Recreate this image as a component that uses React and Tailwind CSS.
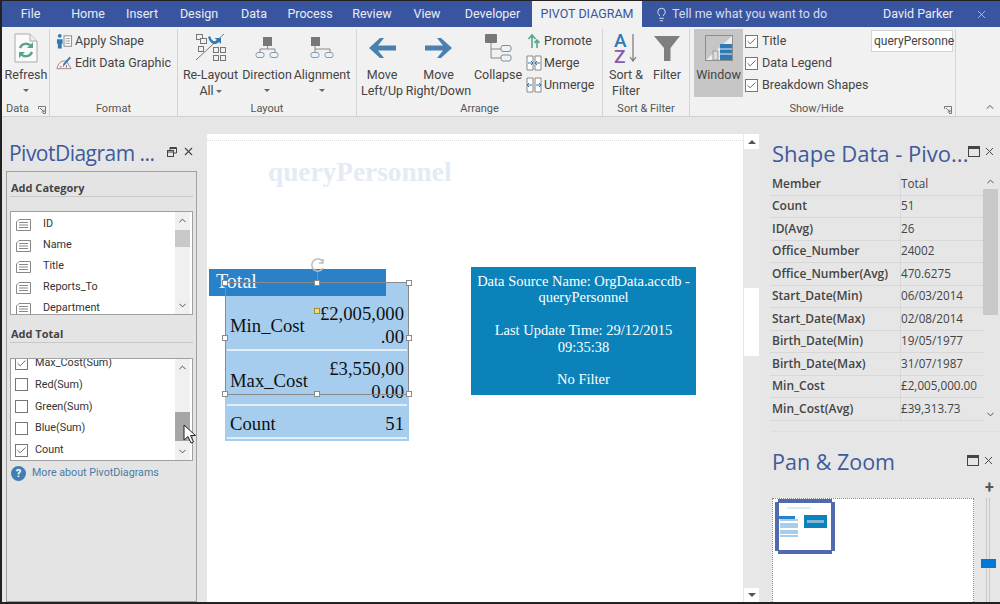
import React from 'react';
import { Check, ChevronDown, ChevronUp, Lightbulb, X } from 'lucide-react';

const TABS = [
  ['File', 'w-[57px]'],
  ['Home', 'w-[58px]'],
  ['Insert', 'w-[50px]'],
  ['Design', 'w-[64px]'],
  ['Data', 'w-[46px]'],
  ['Process', 'w-[66px]'],
  ['Review', 'w-[58px]'],
  ['View', 'w-[52px]'],
  ['Developer', 'w-[79px]'],
];

const CATEGORIES = ['ID', 'Name', 'Title', 'Reports_To', 'Department'];

const TOTALS = [
  ['Red(Sum)', false],
  ['Green(Sum)', false],
  ['Blue(Sum)', false],
  ['Count', true],
];

const SHAPE_DATA = [
  ['Member', 'Total'],
  ['Count', '51'],
  ['ID(Avg)', '26'],
  ['Office_Number', '24002'],
  ['Office_Number(Avg)', '470.6275'],
  ['Start_Date(Min)', '06/03/2014'],
  ['Start_Date(Max)', '02/08/2014'],
  ['Birth_Date(Min)', '19/05/1977'],
  ['Birth_Date(Max)', '31/07/1987'],
  ['Min_Cost', '£2,005,000.00'],
  ['Min_Cost(Avg)', '£39,313.73'],
];

const Caret = () => (
  <div className="flex h-[14px] items-center justify-center">
    <div className="h-0 w-0 border-x-[3px] border-t-[3px] border-x-transparent border-t-[#666]" />
  </div>
);

const Launcher = () => (
  <svg width="8" height="8" viewBox="0 0 8 8" fill="none" stroke="#777" strokeWidth="1">
    <path d="M0.5 3V0.5H7.5V7.5H5M2 2L6 6M6 3.5V6H3.5" />
  </svg>
);

const Group = ({ width, label, labelClass = '', launcher, children }) => (
  <div className={`relative flex h-[88px] shrink-0 flex-col border-r border-[#d4d4d4] ${width}`}>
    <div className="flex h-[72px] items-start">{children}</div>
    <div className={`text-center text-[11px] leading-[16px] text-[#555] ${labelClass}`}>{label}</div>
    {launcher && (
      <div className="absolute right-[3px] bottom-[3px] flex">
        <Launcher />
      </div>
    )}
  </div>
);

const BigButton = ({ width, icon, lines, caret }) => (
  <div className={`flex shrink-0 flex-col items-center ${width}`}>
    <div className="flex h-[38px] w-full items-center justify-center">{icon}</div>
    {lines.map((line, i) => (
      <div key={i} className="flex items-center gap-[2px] whitespace-nowrap text-[12.5px] leading-[16px] text-[#444]">
        {line}
      </div>
    ))}
    {caret && <Caret />}
  </div>
);

const SmallButton = ({ icon, label }) => (
  <div className="flex h-[22px] items-center gap-[2px] whitespace-nowrap text-[12.5px] text-[#444]">
    <div className="flex w-[17px] justify-center">{icon}</div>
    {label}
  </div>
);

const CheckBox = ({ checked, size = 'h-[13px] w-[13px]' }) => (
  <div className={`flex shrink-0 items-center justify-center border border-[#777] bg-white ${size}`}>
    {checked && <Check size={11} strokeWidth={1.6} className="text-[#333]" />}
  </div>
);

const RefreshIcon = () => (
  <svg width="24" height="30" viewBox="0 0 24 30">
    <path d="M1 1H16L23 8V29H1Z" fill="#fafafa" stroke="#aaa" />
    <path d="M16 1V8H23" fill="#eee" stroke="#aaa" />
    <path d="M6 15a6.5 6.5 0 0 1 11-2M18 19a6.5 6.5 0 0 1-11 2" fill="none" stroke="#5aa58a" strokeWidth="2.4" />
    <path d="M19 9V15H13ZM5 25V19H11Z" fill="#5aa58a" />
  </svg>
);

const ApplyShapeIcon = () => (
  <svg width="18" height="17" viewBox="0 0 18 17">
    <circle cx="4" cy="2.5" r="2" fill="#2f79b5" />
    <path d="M1 6H7V11H6V16H2V11H1Z" fill="#2f79b5" />
    <rect x="8.5" y="2.5" width="8" height="11" fill="#fff" stroke="#888" />
    <path d="M10 5.5H15M10 8H15M10 10.5H15" stroke="#999" />
  </svg>
);

const EditGraphicIcon = () => (
  <svg width="18" height="16" viewBox="0 0 18 16" fill="none">
    <path d="M1 14C2 8 6 5 11 6L16 14Z" fill="#f5f5f5" stroke="#a08080" />
    <path d="M4 12H6M8 10V12M11 10V13" stroke="#c05050" />
    <path d="M8 10L15 2" stroke="#2f79b5" strokeWidth="2" />
  </svg>
);

const ReLayoutIcon = () => (
  <svg width="32" height="30" viewBox="0 0 32 30" fill="none" stroke="#777">
    <rect x="1.5" y="1.5" width="6" height="5" />
    <rect x="5.5" y="5.5" width="6" height="5" fill="#f1f1f1" />
    <rect x="3.5" y="13.5" width="5" height="5" />
    <path d="M1 27L29 1" />
    <rect x="18.5" y="14.5" width="5" height="5" />
    <rect x="25.5" y="14.5" width="5" height="5" />
    <rect x="18.5" y="22.5" width="5" height="5" />
    <rect x="25.5" y="22.5" width="5" height="5" />
    <path d="M15 3C17 9 20 9 22 7L19.5 5H26V11L24 9C20 13 15 11 13 4Z" fill="#2f79b5" stroke="none" />
  </svg>
);

const DirectionIcon = () => (
  <svg width="24" height="22" viewBox="0 0 24 22" fill="none" stroke="#7b9cb8">
    <rect x="8" y="0" width="9" height="9" fill="#777" stroke="none" />
    <path d="M12.5 9V12M5 15V12H20V15" stroke="#888" />
    <rect x="1" y="15.5" width="8" height="5" rx="2" />
    <rect x="15" y="15.5" width="8" height="5" rx="2" />
  </svg>
);

const AlignmentIcon = () => (
  <svg width="24" height="22" viewBox="0 0 24 22" fill="none" stroke="#7b9cb8">
    <rect x="1" y="0" width="9" height="9" fill="#777" stroke="none" />
    <path d="M5 9V15M5 12H20V15" stroke="#888" />
    <rect x="1" y="15.5" width="8" height="5" rx="2" />
    <rect x="15" y="15.5" width="8" height="5" rx="2" />
  </svg>
);

const ArrowIcon = ({ flip }) => (
  <svg width="27" height="20" viewBox="0 0 27 20" className={flip ? '-scale-x-100' : ''}>
    <path d="M11 0H15L9 7.5H27V12.500H9L15 20H11L0 10Z" fill="#4a80b0" />
  </svg>
);

const CollapseIcon = () => (
  <svg width="27" height="29" viewBox="0 0 27 29" fill="none" stroke="#7b8f9f">
    <rect x="0" y="0" width="12" height="9" rx="1" fill="#777" stroke="none" />
    <path d="M6 9V24H16M6 15H16" stroke="#888" />
    <rect x="16" y="11.500" width="10" height="6" rx="2" />
    <rect x="16" y="21" width="10" height="6" rx="2" />
  </svg>
);

const PromoteIcon = () => (
  <svg width="14" height="16" viewBox="0 0 14 16" fill="none" stroke="#5aa58a" strokeWidth="1.6">
    <path d="M5 15V3M1.500 6L5 2L8.500 6M10 15V7M7.500 10L10 7L12.500 10" />
  </svg>
);

const MergeIcon = ({ out }) => (
  <svg width="16" height="16" viewBox="0 0 16 16" fill="none">
    <path d="M1 1H7V15H1ZM9 1H15V15H9Z" stroke="#888" fill="#fff" />
    <path d={out ? 'M1 8H6M3 6L1 8L3 10M15 8H10M13 6L15 8L13 10' : 'M2 8H7M5 6L7 8L5 10M14 8H9M11 6L9 8L11 10'} stroke="#2f79b5" />
  </svg>
);

const SortIcon = () => (
  <svg width="24" height="31" viewBox="0 0 24 31" fill="none" className="overflow-visible">
    <text x="0" y="14" fontSize="19" fontWeight="500" fill="#2f79b5">A</text>
    <text x="0" y="30" fontSize="19" fontWeight="500" fill="#8c5aa8">Z</text>
    <path d="M19 1V28M16 24L19 28L22 24" stroke="#777" strokeWidth="1.2" />
  </svg>
);

const FilterIcon = () => (
  <svg width="26" height="26" viewBox="0 0 26 26">
    <path d="M0 1H26L16.500 13V26H10V13Z" fill="#7f7f7f" />
  </svg>
);

const WindowIcon = () => (
  <svg width="28" height="26" viewBox="0 0 28 26" fill="none">
    <path d="M0.500 0.500H27.500V25.500H0.500Z" stroke="#555" strokeDasharray="1 1" />
    <path d="M1 25L27 1V25Z" fill="#eee" />
    <rect x="15" y="9" width="12" height="16" fill="#2f79b5" />
    <path d="M15 14H27M15 19H27" stroke="#eee" />
    <rect x="8" y="16" width="5" height="9" fill="#ddd" stroke="#999" />
  </svg>
);

const TitleBar = () => (
  <div className="flex h-[26px] shrink-0 items-center bg-[#3a55a0] text-[12.5px] text-[#e8edf6]">
    {TABS.map(([label, width]) => (
      <div key={label} className={`text-center ${width}`}>{label}</div>
    ))}
    <div className="flex h-full w-[110px] items-center justify-center bg-[#f1f1f1] text-[#3a55a0]">PIVOT DIAGRAM</div>
    <Lightbulb size={15} strokeWidth={1.4} className="ml-[12px]" />
    <div className="ml-[3px] w-[211px] text-[#d5def0]">Tell me what you want to do</div>
    <div className="w-[92px]">David Parker</div>
    <X size={13} strokeWidth={1.2} />
  </div>
);

const Ribbon = () => (
  <div className="flex h-[90px] shrink-0 items-start border-b border-[#d0d0d0] bg-[#f1f1f1] pt-[2px]">
    <Group width="w-[48px]" label="Data" labelClass="pr-[16px]" launcher>
      <BigButton width="w-[48px]" icon={<RefreshIcon />} lines={['Refresh']} caret />
    </Group>
    <Group width="w-[128px]" label="Format">
      <div className="flex flex-col pt-[1px] pl-[6px]">
        <SmallButton icon={<ApplyShapeIcon />} label="Apply Shape" />
        <SmallButton icon={<EditGraphicIcon />} label="Edit Data Graphic" />
      </div>
    </Group>
    <Group width="w-[179px]" label="Layout">
      <BigButton
        width="w-[63px] ml-[1px]"
        icon={<ReLayoutIcon />}
        lines={[
          'Re-Layout',
          <>
            All
            <div className="h-0 w-0 border-x-[3px] border-t-[3px] border-x-transparent border-t-[#666]" />
          </>,
        ]}
      />
      <BigButton width="w-[50px]" icon={<DirectionIcon />} lines={['Direction']} caret />
      <BigButton width="w-[60px]" icon={<AlignmentIcon />} lines={['Alignment']} caret />
    </Group>
    <Group width="w-[246px]" label="Arrange">
      <BigButton width="w-[48px] ml-[1px]" icon={<ArrowIcon />} lines={['Move', 'Left/Up']} />
      <BigButton width="w-[65px]" icon={<ArrowIcon flip />} lines={['Move', 'Right/Down']} />
      <BigButton width="w-[54px]" icon={<CollapseIcon />} lines={['Collapse']} />
      <div className="flex flex-col pt-[1px]">
        <SmallButton icon={<PromoteIcon />} label="Promote" />
        <SmallButton icon={<MergeIcon />} label="Merge" />
        <SmallButton icon={<MergeIcon out />} label="Unmerge" />
      </div>
    </Group>
    <Group width="w-[87px]" label="Sort & Filter">
      <BigButton width="w-[46px]" icon={<SortIcon />} lines={['Sort &', 'Filter']} />
      <BigButton width="w-[36px]" icon={<FilterIcon />} lines={['Filter']} />
    </Group>
    <Group width="w-[266px]" label="Show/Hide" labelClass="pr-[12px]" launcher>
      <div className="ml-[4px] flex h-[68px] w-[49px] shrink-0 flex-col items-center bg-[#c6c6c6]">
        <div className="flex h-[38px] items-center"><WindowIcon /></div>
        <div className="text-[12.5px] leading-[16px] text-[#444]">Window</div>
      </div>
      <div className="flex w-[128px] shrink-0 flex-col pt-[1px] pl-[2px]">
        {['Title', 'Data Legend', 'Breakdown Shapes'].map((label) => (
          <div key={label} className="flex h-[22px] items-center gap-[4px] whitespace-nowrap text-[12.5px] text-[#444]">
            <CheckBox checked />
            {label}
          </div>
        ))}
      </div>
      <div className="mt-[1px] h-[22px] w-[82px] shrink-0 border border-[#d4d4d4] bg-white pl-[2px] text-[12px] leading-[20px] whitespace-nowrap text-[#444]">
        queryPersonne
      </div>
    </Group>
    <div className="flex h-[86px] flex-1 items-end justify-end pr-[4px] pb-[2px]">
      <ChevronUp size={12} className="text-[#555]" />
    </div>
  </div>
);

const ListBox = ({ height, children, thumb }) => (
  <div className={`relative mx-[3px] flex overflow-hidden border border-[#a0a0a0] bg-white pr-[2px] ${height}`}>
    <div className="min-w-0 flex-1 overflow-hidden">{children}</div>
    <div className="flex w-[15px] flex-col items-center justify-between bg-[#f0f0f0] py-[3px]">
      <ChevronUp size={11} className="text-[#444]" />
      <ChevronDown size={11} className="text-[#444]" />
    </div>
    {thumb}
  </div>
);

const FieldIcon = () => (
  <svg width="15" height="12" viewBox="0 0 15 12" fill="none" stroke="#888">
    <path d="M0.500 3L3 0.500H14.500V11.500H0.500ZM3 3.500H12M3 6H12M3 8.500H12" />
  </svg>
);

const LeftPanel = () => (
  <div className="flex w-[205px] shrink-0 flex-col">
    <div className="flex h-[54px] items-center justify-between pt-[20px] pr-[12px] pl-[7px]">
      <span className="font-['Open_Sans',sans-serif] text-[21px] tracking-tight whitespace-nowrap text-[#3e5a9c]">PivotDiagram ...</span>
      <div className="mb-[5px] flex items-center gap-[5px] text-[#444]">
        <svg width="10" height="10" viewBox="0 0 10 10" fill="none" stroke="#444">
          <path d="M3 3V0.500H9.500V6H7" />
          <path d="M3 1.500H9.500" />
          <rect x="0.500" y="3.500" width="6" height="6" />
          <path d="M0.500 5H6.500" />
        </svg>
        <X size={13} strokeWidth={2} />
      </div>
    </div>
    <div className="mr-[10px] ml-[4px] flex-1 border border-[#a0a0a0] bg-[#e4e4e4]">
      <div className="mx-[3px] mt-[8px] mb-[14px] border-b border-[#c8c8c8] pl-[1px] font-['Open_Sans',sans-serif] text-[11px] leading-[16px] font-bold text-[#444]">Add Category</div>
      <ListBox
        height="h-[104px]"
        thumb={<div className="absolute top-[18px] right-[2px] h-[17px] w-[15px] bg-[#c8c8c8]" />}
      >
        {CATEGORIES.map((name) => (
          <div key={name} className="flex h-[21px] items-center pt-[4px] pl-[5px] text-[10.800px] text-[#333]">
            <FieldIcon />
            <span className="ml-[12px]">{name}</span>
          </div>
        ))}
      </ListBox>
      <div className="mx-[3px] mt-[11px] mb-[15px] border-b border-[#c8c8c8] pl-[1px] font-['Open_Sans',sans-serif] text-[11px] leading-[16px] font-bold text-[#444]">Add Total</div>
      <ListBox
        height="h-[103px]"
        thumb={<div className="absolute top-[53px] right-[2px] h-[29px] w-[15px] bg-[#a6a6a6]" />}
      >
        <div className="mt-[-7px] flex h-[22px] items-center gap-[7px] pl-[4px] text-[10.800px] text-[#333]">
          <CheckBox checked />
          Max_Cost(Sum)
        </div>
        {TOTALS.map(([name, checked]) => (
          <div key={name} className="flex h-[21.800px] items-center gap-[7px] pl-[4px] text-[10.800px] text-[#333]">
            <CheckBox checked={checked} />
            {name}
          </div>
        ))}
      </ListBox>
      <div className="mt-[4px] flex items-center gap-[6px] pl-[4px] text-[10.700px] text-[#4a7ba6]">
        <div className="flex h-[15px] w-[15px] items-center justify-center rounded-full bg-[#3f7fb5] text-[11px] leading-none font-bold text-white">?</div>
        More about PivotDiagrams
      </div>
    </div>
  </div>
);

const Handle = ({ className }) => (
  <div className={`absolute h-[6px] w-[6px] border border-[#8a8a8a] bg-white ${className}`} />
);

const Canvas = () => (
  <div className="relative mt-[17px] w-[536px] shrink-0 overflow-hidden bg-white font-['Liberation_Serif',serif]">
    <div className="absolute top-[6px] right-0 left-0 border-t border-dotted border-[#dddddd]" />
    <div className="absolute top-[18px] left-[61px] text-[27.300px] font-bold whitespace-nowrap text-[#e3ebf5]">queryPersonnel</div>

    <div className="absolute top-[148px] left-[18px] flex h-[159px] w-[184px] flex-col bg-[#a6cdee] px-[2px] text-[18.700px] leading-[23px] text-[#111]">
      <div className="flex h-[69px] shrink-0 items-end justify-between border-b-2 border-[#e3eefa] pr-[3px] pb-[1px] pl-[3px]">
        <span className="mb-[11px]">Min_Cost</span>
        <span className="text-right">£2,005,000<br />.00</span>
      </div>
      <div className="flex h-[55px] shrink-0 items-end justify-between border-b-2 border-[#e3eefa] pr-[3px] pb-[1px] pl-[3px]">
        <span className="mb-[11px]">Max_Cost</span>
        <span className="text-right">£3,550,00<br />0.00</span>
      </div>
      <div className="flex h-[33px] shrink-0 items-center justify-between border-b-2 border-[#e3eefa] pt-[4px] pr-[3px] pl-[3px]">
        <span>Count</span>
        <span>51</span>
      </div>
    </div>

    <div className="absolute top-[135px] left-[2px] flex h-[27px] w-[177px] items-center bg-[#2a81c8] pb-[3px] pl-[7px] text-[20px] text-[#f2f7fc]">Total</div>

    <div className="absolute top-[133px] left-[264px] flex h-[128px] w-[225px] flex-col items-center bg-[#0b82b9] px-[3px] pt-[6px] text-center text-[14.500px] leading-[16.400px] text-white">
      <div className="whitespace-nowrap">Data Source Name: OrgData.accdb -</div>
      <div>queryPersonnel</div>
      <div className="h-[16.400px]" />
      <div>Last Update Time: 29/12/2015</div>
      <div>09:35:38</div>
      <div className="h-[16.400px]" />
      <div>No Filter</div>
    </div>

    {/* selection frame over the table */}
    <div className="absolute top-[148px] left-[18px] h-[113px] w-[184px] border border-[#8a8a8a]">
      <Handle className="top-[-3px] left-[-4px]" />
      <Handle className="top-[-3px] left-[88px]" />
      <Handle className="top-[-3px] right-[-4px]" />
      <Handle className="top-[52px] left-[-4px]" />
      <Handle className="top-[52px] right-[-4px]" />
      <Handle className="bottom-[-3px] left-[-4px]" />
      <Handle className="bottom-[-3px] left-[88px]" />
      <Handle className="right-[-4px] bottom-[-3px]" />
      <div className="absolute top-[25px] left-[88px] h-[6px] w-[6px] border border-[#a58a30] bg-[#f2da7a]" />
      <div className="absolute top-[-12px] left-[91px] h-[10px] w-px bg-[#8a8a8a]" />
      <svg width="16" height="16" viewBox="0 0 16 16" fill="none" stroke="#bdbdbd" strokeWidth="1.500" className="absolute top-[-26px] left-[84px]">
        <path d="M13 11A6 6 0 1 1 13 5M13 2V6H9" />
      </svg>
    </div>
  </div>
);

const VScroll = () => (
  <div className="relative mt-[17px] flex w-[17px] shrink-0 flex-col items-center justify-between bg-[#e8e8e8]">
    <div className="flex h-[15px] w-[15px] items-center justify-center bg-white">
      <div className="h-0 w-0 border-x-[4px] border-b-[4px] border-x-transparent border-b-[#555]" />
    </div>
    <div className="absolute top-[154px] left-px h-[68px] w-[15px] bg-white" />
    <div className="flex h-[14px] w-[15px] items-center justify-center bg-white">
      <div className="h-0 w-0 border-x-[4px] border-t-[4px] border-x-transparent border-t-[#555]" />
    </div>
  </div>
);

const PaneHeader = ({ title, size }) => (
  <div className="flex items-center justify-between pr-[5px]">
    <span className={`font-['Open_Sans',sans-serif] whitespace-nowrap text-[#3e5a9c] ${size}`}>{title}</span>
    <div className="mb-[4px] flex items-center gap-[3px] text-[#444]">
      <div className="h-[11px] w-[12px] border border-t-[3px] border-[#444] bg-[#e6e6e6]" />
      <X size={13} strokeWidth={1.800} />
    </div>
  </div>
);

const RightPanel = () => (
  <div className="flex min-w-0 flex-1 flex-col pl-[12px]">
    <div className="pt-[20px]">
      <PaneHeader title="Shape Data - Pivo..." size="text-[22px]" />
    </div>
    <div className="relative mt-[3px] ml-[-2px] flex h-[250px]">
      <div className="w-[213px] overflow-hidden font-['Open_Sans',sans-serif]">
        {SHAPE_DATA.map(([member, value]) => (
          <div key={member} className="flex h-[22.500px] items-center border-b border-[#d8d8d8] text-[12px] whitespace-nowrap text-[#444]">
            <div className="flex h-full w-[131px] items-center border-r border-[#d8d8d8] pl-[2px] font-semibold">{member}</div>
            <div className="text-[11.700px]">{value}</div>
          </div>
        ))}
      </div>
      <div className="relative flex w-[15px] flex-col items-center justify-between py-[3px]">
        <ChevronUp size={11} className="text-[#444]" />
        <div className="absolute top-[16px] h-[126px] w-[15px] bg-[#c8c8c8]" />
        <ChevronDown size={11} className="text-[#444]" />
      </div>
    </div>
    <div className="mt-[8px] border-t border-[#dedede] pt-[14px]">
      <PaneHeader title="Pan & Zoom" size="text-[21.500px]" />
    </div>
    <div className="mt-[20px] flex flex-1 items-stretch">
      <div className="w-[202px] border-t border-r border-l border-dotted border-[#888] bg-white pl-[2px]">
        <div className="relative h-[55px] w-[60px] border-[4px] border-[#4f6bad] bg-white">
          <div className="absolute top-[4px] left-[8px] h-[2px] w-[24px] bg-[#e2eaf4]" />
          <div className="absolute top-[13px] left-0 h-[3px] w-[16px] bg-[#2a81c8]" />
          <div className="absolute top-[16px] left-[1px] flex h-[18px] w-[18px] flex-col justify-around bg-[#a6cdee]">
            <div className="h-[2px] bg-white" />
            <div className="h-[2px] bg-white" />
            <div className="h-[1px] bg-white" />
          </div>
          <div className="absolute top-[12px] left-[25px] flex h-[13px] w-[23px] items-center bg-[#0b82b9] px-[3px]">
            <div className="h-[3px] w-full bg-[#7ab9d8]" />
          </div>
          <div className="absolute top-[-4px] left-[-4px] h-[3px] w-[3px] bg-white" />
          <div className="absolute top-[-4px] right-[-4px] h-[3px] w-[3px] bg-white" />
          <div className="absolute bottom-[-4px] left-[-4px] h-[3px] w-[3px] bg-white" />
          <div className="absolute right-[-4px] bottom-[-4px] h-[3px] w-[3px] bg-white" />
        </div>
      </div>
      <div className="relative flex w-[24px] flex-col items-center pl-[4px]">
        <div className="absolute top-[-18px] left-[11px] text-[16px] leading-[16px] font-bold text-[#555]">+</div>
        <div className="h-full w-[4px] border-x border-[#c8c8c8]" />
        <div className="absolute top-[61px] left-[7px] h-[9px] w-[15px] bg-[#0078d7]" />
      </div>
    </div>
  </div>
);

const Pointer = () => (
  <svg width="14" height="20" viewBox="0 0 14 20" className="absolute top-[423px] left-[181px]">
    <path d="M1 1V16L5 12.500L8 19L10.500 18L7.500 11.500H12.500Z" fill="#fff" stroke="#222" />
  </svg>
);

export default function App() {
  return (
    <div className="relative flex h-[604px] w-[1000px] flex-col overflow-hidden border-t border-b-2 border-l-2 border-[#222] bg-[#e6e6e6] font-['Roboto',sans-serif]">
      <TitleBar />
      <Ribbon />
      <div className="flex min-h-0 flex-1">
        <LeftPanel />
        <Canvas />
        <VScroll />
        <RightPanel />
      </div>
      <Pointer />
    </div>
  );
}
